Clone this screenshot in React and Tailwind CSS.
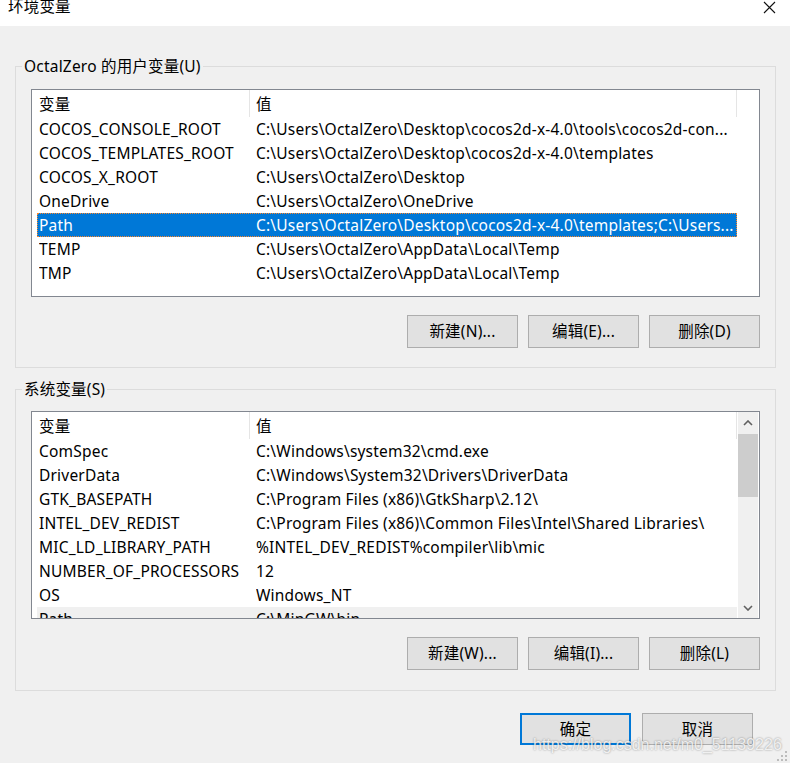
import React from "react";

const userVars = [
  ["COCOS_CONSOLE_ROOT", "C:\\Users\\OctalZero\\Desktop\\cocos2d-x-4.0\\tools\\cocos2d-con..."],
  ["COCOS_TEMPLATES_ROOT", "C:\\Users\\OctalZero\\Desktop\\cocos2d-x-4.0\\templates"],
  ["COCOS_X_ROOT", "C:\\Users\\OctalZero\\Desktop"],
  ["OneDrive", "C:\\Users\\OctalZero\\OneDrive"],
  ["Path", "C:\\Users\\OctalZero\\Desktop\\cocos2d-x-4.0\\templates;C:\\Users...", "selected"],
  ["TEMP", "C:\\Users\\OctalZero\\AppData\\Local\\Temp"],
  ["TMP", "C:\\Users\\OctalZero\\AppData\\Local\\Temp"],
];

const sysVars = [
  ["ComSpec", "C:\\Windows\\system32\\cmd.exe"],
  ["DriverData", "C:\\Windows\\System32\\Drivers\\DriverData"],
  ["GTK_BASEPATH", "C:\\Program Files (x86)\\GtkSharp\\2.12\\"],
  ["INTEL_DEV_REDIST", "C:\\Program Files (x86)\\Common Files\\Intel\\Shared Libraries\\"],
  ["MIC_LD_LIBRARY_PATH", "%INTEL_DEV_REDIST%compiler\\lib\\mic"],
  ["NUMBER_OF_PROCESSORS", "12"],
  ["OS", "Windows_NT"],
  ["Path", "C:\\MinGW\\bin", "hover"],
];

function Header() {
  return (
    <div className="h-[27px] flex shrink-0">
      <div className="w-[218px] h-full pl-[7px] pt-[2px] flex items-center border-r border-[#e5e5e5]">变量</div>
      <div className="w-[487px] h-full pl-[6px] pt-[2px] flex items-center border-r border-[#e5e5e5]">值</div>
    </div>
  );
}

function Row({ name, value, state }) {
  if (state === "selected") {
    return (
      <div className="ml-[5px] w-[700px] h-[24px] shrink-0 flex items-center pl-[1px] pt-[1px] bg-[#0078d7] text-white border border-dotted border-[#ff8728]">
        <div className="w-[217px] overflow-hidden whitespace-nowrap">{name}</div>
        <div className="flex-1 min-w-0 overflow-hidden whitespace-nowrap">{value}</div>
      </div>
    );
  }
  return (
    <div
      className={
        state === "hover"
          ? "ml-[5px] w-[700px] h-[24px] shrink-0 flex items-center pl-[2px] pt-[2px] bg-[#f0f0f0]"
          : "ml-[5px] w-[700px] h-[24px] shrink-0 flex items-center pl-[2px] pt-[2px]"
      }
    >
      <div className="w-[217px] overflow-hidden whitespace-nowrap">{name}</div>
      <div className="flex-1 min-w-0 overflow-hidden whitespace-nowrap">{value}</div>
    </div>
  );
}

function Chevron({ down }) {
  return (
    <svg width="10" height="6" viewBox="0 0 10 6">
      <polyline
        points={down ? "1,1 5,5 9,1" : "1,5 5,1 9,5"}
        fill="none"
        stroke="#606060"
        strokeWidth="1.6"
      />
    </svg>
  );
}

function Button({ children }) {
  return (
    <div className="w-[111px] h-[33px] pt-[1px] flex items-center justify-center bg-[#e1e1e1] border border-[#adadad]">
      {children}
    </div>
  );
}

function OkButton({ children, primary }) {
  return (
    <div
      className={
        primary
          ? "w-[111px] h-[32px] pt-[1px] flex items-center justify-center bg-[#e1e1e1] border-2 border-[#0078d7]"
          : "w-[111px] h-[32px] pt-[1px] flex items-center justify-center bg-[#e1e1e1] border border-[#adadad]"
      }
    >
      {children}
    </div>
  );
}

export default function App() {
  return (
    <div className="w-[790px] h-[763px] bg-[#f0f0f0] relative overflow-hidden flex flex-col text-[15.5px] tracking-[0.2px] text-black font-['Noto_Sans','Noto_Sans_CJK_SC',sans-serif]">
      {/* Title bar */}
      <div className="h-[26px] bg-white flex justify-between shrink-0">
        <span className="pl-[8px] leading-[15px] -mt-[1px]">环境变量</span>
        <svg className="mr-[14px] mt-[1px]" width="13" height="13" viewBox="0 0 13 13">
          <path d="M1 1 L12 12 M12 1 L1 12" stroke="#111" strokeWidth="1.1" fill="none" />
        </svg>
      </div>

      {/* User variables */}
      <fieldset className="mt-[30px] ml-[15px] w-[761px] border border-[#dcdcdc] shrink-0">
        <legend className="ml-[6px] px-[2px] leading-[20px]">OctalZero 的用户变量(U)</legend>
        <div className="px-[15px] pt-[13px] pb-[19px]">
          <div className="h-[208px] border border-[#828790] bg-white overflow-hidden flex flex-col">
            <Header />
            {userVars.map(([n, v, s]) => (
              <Row key={n} name={n} value={v} state={s} />
            ))}
          </div>
          <div className="flex justify-end gap-[10px] mt-[18px]">
            <Button>新建(N)...</Button>
            <Button>编辑(E)...</Button>
            <Button>删除(D)</Button>
          </div>
        </div>
      </fieldset>

      {/* System variables */}
      <fieldset className="mt-[11px] ml-[15px] w-[761px] border border-[#dcdcdc] shrink-0">
        <legend className="ml-[6px] px-[2px] leading-[20px]">系统变量(S)</legend>
        <div className="px-[15px] pt-[12px] pb-[20px]">
          <div className="h-[208px] border border-[#828790] bg-white overflow-hidden flex">
            <div className="w-[706px] h-full flex flex-col overflow-hidden">
              <Header />
              {sysVars.map(([n, v, s]) => (
                <Row key={n} name={n} value={v} state={s} />
              ))}
            </div>
            <div className="w-[20px] h-full bg-[#f0f0f0] flex flex-col shrink-0">
              <div className="h-[22px] flex items-center justify-center">
                <Chevron />
              </div>
              <div className="h-[63px] bg-[#cdcdcd]" />
              <div className="flex-1" />
              <div className="h-[21px] flex items-center justify-center">
                <Chevron down />
              </div>
            </div>
          </div>
          <div className="flex justify-end gap-[10px] mt-[18px]">
            <Button>新建(W)...</Button>
            <Button>编辑(I)...</Button>
            <Button>删除(L)</Button>
          </div>
        </div>
      </fieldset>

      {/* OK / Cancel */}
      <div className="flex justify-end gap-[11px] mt-[22px] pr-[37px]">
        <OkButton primary>确定</OkButton>
        <OkButton>取消</OkButton>
      </div>

      {/* Watermark */}
      <div className="absolute left-[533px] top-[733px] text-[16px] tracking-normal font-['Liberation_Sans',sans-serif] text-white/80 [text-shadow:0_0_2px_rgba(0,0,0,0.45)] pointer-events-none">
        https://blog.csdn.net/m0_51139226
      </div>

      {/* Size grip */}
      <svg className="absolute right-[2px] bottom-[1px]" width="12" height="12" viewBox="0 0 12 12">
        <rect x="9" y="1" width="2" height="2" fill="#bcbcbc" />
        <rect x="5" y="5" width="2" height="2" fill="#bcbcbc" />
        <rect x="9" y="5" width="2" height="2" fill="#bcbcbc" />
        <rect x="1" y="9" width="2" height="2" fill="#bcbcbc" />
        <rect x="5" y="9" width="2" height="2" fill="#bcbcbc" />
        <rect x="9" y="9" width="2" height="2" fill="#bcbcbc" />
      </svg>
    </div>
  );
}
